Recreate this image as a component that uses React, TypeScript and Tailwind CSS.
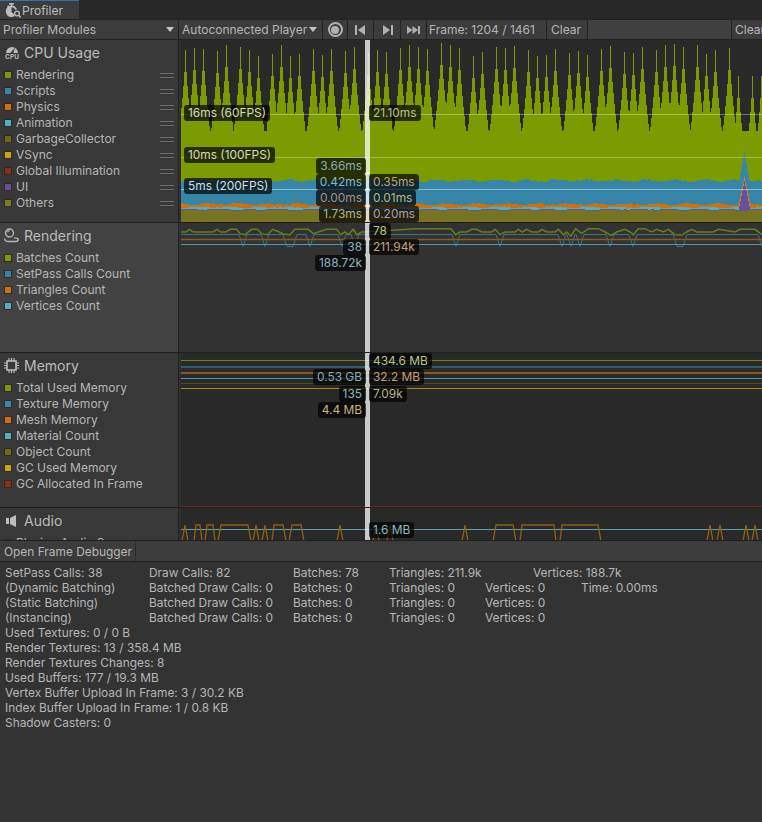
import React from 'react';

const rnd = (i: number) => {
  const v = Math.sin(i * 12.9898) * 43758.5453;
  return v - Math.floor(v);
};

// spikes of the rendering band in the cpu chart
const spikes: { x: number; top: number }[] = [];
{
  const gaps = [9, 9, 14, 9, 14, 9, 9, 14, 9, 9, 9, 14];
  let x = 185;
  let i = 0;
  while (x < 762) {
    let top = 43 + rnd(i + 3) * 13;
    if (x > 735) top = 76;
    spikes.push({ x, top });
    x += gaps[i % gaps.length];
    i++;
  }
}

const steps = (fn: (x: number) => number, bottom = 222) => {
  const p: string[] = [`181,${bottom}`];
  for (let x = 181; x < 762; x++) {
    const y = Math.round(fn(x));
    p.push(`${x},${y}`, `${x + 1},${y}`);
  }
  p.push(`762,${bottom}`);
  return p.join(' ');
};

const greenTop = (x: number) => {
  let y = 131;
  for (const s of spikes) {
    const d = Math.abs(x - s.x);
    y = Math.min(y, s.top + 22 * Math.pow(d, 0.7));
  }
  return y;
};
const wobble = (x: number, a: number, seed: number) =>
  Math.sin(x * 0.21 + seed) * a * 0.6 + (rnd(Math.floor(x / 3) + seed) - 0.5) * a;
const blueTop = (x: number) => Math.min(180.5 + wobble(x, 1.6, 1), 152 + Math.abs(x - 744) * 5.5);
const orangeTop = (x: number) => Math.min(204.2 + wobble(x, 1.2, 5), 176 + Math.abs(x - 744) * 4.5);
const tealTop = (x: number) => Math.min(207.4 + wobble(x, 0.6, 7), 179 + Math.abs(x - 744) * 5);
const purpleTop = (x: number) => Math.min(209.4 + wobble(x, 0.5, 9), 181 + Math.abs(x - 744) * 5);
const oliveTop = (x: number) => Math.min(210.4 + wobble(x, 0.5, 9), 211);

const CpuChart = () => (
  <svg width={581} height={182} viewBox="181 40 581 182" className="absolute left-0 top-0" shapeRendering="crispEdges">
    <polygon points={steps(greenTop)} fill="#7b9b00" />
    <polygon points={steps(blueTop)} fill="#3586a9" />
    <polygon points={steps(orangeTop)} fill="#d2700a" />
    <polygon points={steps(tealTop)} fill="#4fb1bd" />
    <polygon points={steps(purpleTop)} fill="#6b4f9c" />
    <polygon points={steps(oliveTop)} fill="#767420" />
    <rect x={181} y={114} width={581} height={1} fill="#ffffff" fillOpacity={0.35} />
    <rect x={181} y={157} width={581} height={1} fill="#ffffff" fillOpacity={0.3} />
    <rect x={181} y={189} width={581} height={1} fill="#ffffff" fillOpacity={0.45} />
  </svg>
);

// zoomed readings of the batches line, 3x around the crop origin
const batchesA = [[0, 30], [18, 30], [28, 22], [40, 30], [100, 30], [110, 22], [122, 30], [138, 30], [150, 22], [170, 22], [180, 35], [195, 38], [215, 22], [232, 22], [245, 35], [262, 38], [278, 22], [298, 30], [310, 36], [330, 38], [345, 22], [385, 22], [400, 35], [440, 22], [470, 22], [482, 38], [495, 30], [505, 38], [520, 22], [530, 38], [545, 30], [556, 30]];
const batchesB = [[0, 20], [108, 20], [122, 38], [135, 30], [155, 30], [170, 22], [185, 22], [200, 30], [230, 30], [240, 22], [255, 38], [270, 30], [300, 30], [310, 22], [322, 30], [335, 22], [350, 30], [370, 30], [380, 22], [395, 30], [420, 30], [430, 22], [445, 38], [455, 30], [468, 42], [482, 20], [500, 35], [520, 20], [550, 20], [570, 30], [588, 40], [605, 30], [630, 22], [645, 30], [655, 38], [670, 20], [690, 20], [710, 30], [725, 22], [745, 30], [760, 22], [780, 38], [800, 40], [815, 30], [830, 22], [845, 30], [895, 30], [910, 22], [930, 25], [960, 30], [975, 22], [1020, 22], [1041, 38]];
const batchesLine = [
  ...batchesA.map(([x, y]) => `${180 + x / 3},${222 + y / 3}`),
  ...batchesB.map(([x, y]) => `${415 + x / 3},${222 + y / 3}`),
].join(' ');

const setPassDips = [[243, 0], [265, 0], [290, 3], [310, 0], [342, 0], [355, 0], [456, 0], [500, 0], [562, 0], [571, 0], [580, 0], [610, 0], [633, 0], [680, 3], [762, 0]];
const setPassLine = () => {
  const p: string[] = [];
  for (let x = 181; x <= 762; x++) {
    let y = 234.5;
    for (const [d, w] of setPassDips) {
      const t = Math.max(0, 1 - Math.max(0, Math.abs(x - d) - w) / 4);
      y = Math.max(y, 234.5 + 12 * t);
    }
    p.push(`${x},${y}`);
  }
  return p.join(' ');
};

const RenderingChart = () => (
  <svg width={581} height={129} viewBox="181 223 581 129" className="absolute left-0 top-0" fill="none">
    <polyline points={setPassLine()} stroke="#37768f" />
    <line x1={181} x2={762} y1={239.5} y2={239.5} stroke="#8c5a20" strokeWidth={1.4} />
    <line x1={181} x2={762} y1={244.5} y2={244.5} stroke="#4f9aa6" />
    <polyline points={batchesLine} stroke="#6a7f10" strokeWidth={1.5} />
  </svg>
);

const MemoryChart = () => (
  <svg width={581} height={154} viewBox="181 353 581 154" className="absolute left-0 top-0" shapeRendering="crispEdges">
    <rect x={181} y={360} width={581} height={1} fill="#6f8c08" />
    <rect x={181} y={366} width={581} height={2} fill="#2f5d74" />
    <rect x={181} y={372} width={581} height={2} fill="#845a20" />
    <rect x={181} y={378} width={581} height={1} fill="#4c9aa5" />
    <rect x={181} y={383} width={581} height={1} fill="#4c4c18" />
    <rect x={181} y={388} width={581} height={1} fill="#a88a10" />
    <rect x={181} y={506} width={581} height={1} fill="#6a2c18" />
  </svg>
);

const peaks = [185, 256, 265, 340, 376, 390, 465, 710, 720, 746, 755];
const traps = [[194, 196, 200, 202], [205, 207, 213, 215], [218, 221, 248, 251], [272, 274, 283, 286], [289, 292, 301, 304], [493, 496, 513, 516], [520, 522, 554, 556], [560, 562, 598, 601]];

const AudioChart = () => (
  <svg width={581} height={33} viewBox="181 508 581 33" className="absolute left-0 top-0" fill="none">
    <line x1={181} x2={762} y1={529.5} y2={529.5} stroke="#5ea3ab" />
    {peaks.map((x) => (
      <polyline key={x} points={`${x - 3},541 ${x},525 ${x + 3},541`} stroke="#8f5f14" strokeWidth={1.3} />
    ))}
    {traps.map((t) => (
      <polyline key={t[0]} points={`${t[0]},541 ${t[1]},525 ${t[2]},525 ${t[3]},541`} stroke="#8f5f14" strokeWidth={1.3} />
    ))}
  </svg>
);

const labelBase = 'h-[16px] rounded-[3px] bg-black/70 px-1 text-[11.9px] leading-[16px] whitespace-nowrap';

const Label = ({ text, className }: { text: string; className: string }) => (
  <div className={`${labelBase} ${className}`}>{text}</div>
);

// value tags either side of the selected frame
const TagsLeft = ({ className, children }: { className: string; children: React.ReactNode }) => (
  <div className={`absolute right-[396px] flex flex-col items-end ${className}`}>{children}</div>
);
const TagsRight = ({ className, children }: { className: string; children: React.ReactNode }) => (
  <div className={`absolute left-[188px] flex flex-col items-start ${className}`}>{children}</div>
);

const Swatch = ({ color }: { color: string }) => (
  <span className="h-[8px] w-[8px] shrink-0 border border-[#2c2c2c]" style={{ backgroundColor: color }} />
);

const LegendRow = ({ name, color, handle }: { name: string; color: string; handle?: boolean }) => (
  <div className="flex h-[16px] items-center pl-[4px] text-[12px] text-[#b6b6b6]">
    <Swatch color={color} />
    <span className="ml-[4px] whitespace-nowrap">{name}</span>
    {handle && (
      <span className="ml-auto mr-[4px] flex h-[5px] w-[14px] flex-col justify-between">
        <span className="h-px bg-[#6e6e6e]" />
        <span className="h-px bg-[#6e6e6e]" />
      </span>
    )}
  </div>
);

const Section = ({
  icon,
  title,
  items,
  handle,
  height,
  panel = 'bg-[#383838]',
  chartBg = 'bg-[#292929]',
  children,
}: {
  icon: React.ReactNode;
  title: string;
  items: [string, string][];
  handle?: boolean;
  height: string;
  panel?: string;
  chartBg?: string;
  children: React.ReactNode;
}) => (
  <div className={`flex border-b border-[#1f1f1f] ${height}`}>
    <div className={`w-[178px] shrink-0 overflow-hidden ${panel}`}>
      <div className="flex h-[27px] items-center pb-[2px] pl-[4px] text-[14px] text-[#bcbcbc]">
        <span className="flex w-[20px] shrink-0 items-center">{icon}</span>
        {title}
      </div>
      {items.map(([n, c]) => (
        <LegendRow key={n} name={n} color={c} handle={handle} />
      ))}
    </div>
    <div className="w-[3px] shrink-0 border-l border-[#232323] bg-[#303030]" />
    <div className={`relative flex-1 overflow-hidden ${chartBg}`}>
      {children}
    </div>
  </div>
);

const Selection = () => <div className="absolute bottom-0 left-[184px] top-0 w-[5px] bg-white/75" />;
const Dot = ({ className }: { className: string }) => <div className={`absolute left-[186px] h-[2px] w-[2px] bg-white ${className}`} />;

const Arrow = () => (
  <svg width={8} height={5} viewBox="0 0 8 5">
    <path d="M0 0h8L4 5z" fill="#c4c4c4" />
  </svg>
);

const StopwatchIcon = () => (
  <svg width={17} height={16} viewBox="0 0 17 16" fill="#bcbcbc">
    <rect x={4} y={0} width={5} height={1.6} />
    <rect x={5.7} y={1} width={1.6} height={2} />
    <path d="M2 3.500l1.200-1.200 1.200 1.200-1.200 1.200z" />
    <path d="M6.500 2.500a5.800 5.800 0 1 0 0 11.600 5.800 5.800 0 0 0 3.200-1l-1-2.300-2.200-1.900V4.300c1.800 0 3.300 1.100 3.900 2.700l1.500-.8a5.800 5.800 0 0 0-5.400-3.700z" />
    <circle cx={12} cy={10.500} r={2.300} fill="none" stroke="#bcbcbc" strokeWidth={1.3} />
    <path d="M13.700 12.300l2 2.200" stroke="#bcbcbc" strokeWidth={1.4} />
  </svg>
);

const CpuIcon = () => (
  <div className="flex w-[16px] flex-col items-center">
    <svg width={12} height={8} viewBox="0 0 12 8" fill="#bcbcbc">
      <path d="M0 8a6 6 0 0 1 12 0H7.400L9 2.500 5.600 6.600A1.800 1.800 0 0 0 4.500 8z" />
    </svg>
    <span className="mt-[0.5px] text-[6.5px] font-bold leading-[6px] text-[#bcbcbc]">CPU</span>
  </div>
);

const RenderingIcon = () => (
  <svg width={15} height={15} viewBox="0 0 15 15" fill="none" stroke="#bcbcbc" strokeWidth={1.3}>
    <circle cx={5.500} cy={5} r={4} />
    <path d="M3.500 4.200c.4-1 1-1.500 2-1.600" />
    <path d="M1 10.500c-.8 1.600.6 3 3 3h7c2.400 0 3.600-1 3.200-2.200-.3-1-1.700-1.600-4.200-1.500" />
  </svg>
);

const ChipIcon = () => (
  <svg width={15} height={15} viewBox="0 0 15 15" fill="none" stroke="#bcbcbc">
    <rect x={3} y={3} width={9} height={9} strokeWidth={1.6} />
    <path d="M5 0v3M7.500 0v3M10 0v3M5 12v3M7.500 12v3M10 12v3M0 5h3M0 7.500h3M0 10h3M12 5h3M12 7.500h3M12 10h3" strokeWidth={1.1} />
  </svg>
);

const SpeakerIcon = () => (
  <svg width={14} height={14} viewBox="0 0 14 14" fill="#bcbcbc">
    <rect x={2} y={4} width={3} height={6} />
    <path d="M6 4l6-3v12l-6-3z" />
  </svg>
);

const ToolButton = ({ className, children }: { className: string; children?: React.ReactNode }) => (
  <div className={`flex h-full shrink-0 items-center border-r border-[#232323] bg-[#3c3c3c] text-[12px] text-[#b6b6b6] ${className}`}>{children}</div>
);

const Row = ({ cols }: { cols: [string, string][] }) => (
  <div className="flex h-[15px] leading-[15px] whitespace-nowrap">
    {cols.map(([t, w]) => (
      <span key={t + w} className={w}>{t}</span>
    ))}
  </div>
);

const batching = (name: string) => (
  <Row
    cols={[
      [name, 'w-[144px]'],
      ['Batched Draw Calls: 0', 'w-[144px]'],
      ['Batches: 0', 'w-[96px]'],
      ['Triangles: 0', 'w-[96px]'],
      ['Vertices: 0', 'w-[96px]'],
    ]}
  />
);

export default function App() {
  return (
    <div className="h-[822px] w-[762px] overflow-hidden bg-[#333333] font-['Inter',sans-serif]">
      {/* Tab strip */}
      <div className="h-[19px] bg-[#282828]">
        <div className="flex h-[19px] w-[79px] items-center border-t border-[#3a6ea5] bg-[#3c3c3c] pl-[5px] pt-[1px] text-[12px] text-[#bcbcbc]">
          <StopwatchIcon />
          Profiler
        </div>
      </div>

      {/* Toolbar */}
      <div className="flex h-[21px] border-y border-[#232323]">
        <ToolButton className="w-[179px] justify-between pl-[3px] pr-[4px]">
          Profiler Modules
          <Arrow />
        </ToolButton>
        <ToolButton className="w-[144px] justify-between pl-[3px] pr-[5px]">
          Autoconnected Player
          <Arrow />
        </ToolButton>
        <ToolButton className="w-[25px] justify-center">
          <span className="flex h-[15px] w-[15px] items-center justify-center rounded-full border-[2px] border-[#b0b0b0]">
            <span className="h-[8px] w-[8px] rounded-full bg-[#b0b0b0]" />
          </span>
        </ToolButton>
        <ToolButton className="w-[26px] justify-center">
          <svg width={11} height={10} viewBox="0 0 11 10" fill="#b0b0b0"><rect x={0} y={0} width={2} height={10} /><path d="M10 0v10L3 5z" /></svg>
        </ToolButton>
        <ToolButton className="w-[27px] justify-center">
          <svg width={11} height={10} viewBox="0 0 11 10" fill="#b0b0b0"><rect x={9} y={0} width={2} height={10} /><path d="M1 0v10l7-5z" /></svg>
        </ToolButton>
        <ToolButton className="w-[26px] justify-center">
          <svg width={13} height={8} viewBox="0 0 13 8" fill="#b0b0b0"><path d="M0 0v8l5.500-4zM5.500 0v8l5.500-4z" /><rect x={11} y={0} width={2} height={8} /></svg>
        </ToolButton>
        <ToolButton className="w-[120px] pl-[2px]">Frame: 1204 / 1461</ToolButton>
        <ToolButton className="w-[41px] pl-[4px]">Clear</ToolButton>
        <ToolButton className="w-[144px] !bg-[#404040]" />
        <ToolButton className="flex-1 overflow-hidden pl-[3px] border-r-0">Clear</ToolButton>
      </div>

      {/* Modules */}
      <div className="h-[500px] overflow-hidden">
        <Section
          icon={<CpuIcon />}
          title="CPU Usage"
          height="h-[183px]"
          handle
          items={[
            ['Rendering', '#7b9b00'],
            ['Scripts', '#3586a9'],
            ['Physics', '#d2700a'],
            ['Animation', '#4fb1bd'],
            ['GarbageCollector', '#6e6c12'],
            ['VSync', '#c8a60a'],
            ['Global Illumination', '#8a2f10'],
            ['UI', '#6b4f9c'],
            ['Others', '#7a7a20'],
          ]}
        >
          <CpuChart />
          <Selection />
          <Dot className="top-[132px]" />
          <Dot className="top-[148px]" />
          <Dot className="top-[165px]" />
          <Label text="16ms (60FPS)" className="absolute left-[3px] top-[65px] text-[#d8d8c8]" />
          <Label text="10ms (100FPS)" className="absolute left-[3px] top-[107px] text-[#d8d8c8]" />
          <Label text="5ms (200FPS)" className="absolute left-[3px] top-[138px] text-[#d8dfe4]" />
          <Label text="21.10ms" className="absolute left-[188px] top-[65px] text-[#b8c284]" />
          <TagsLeft className="top-[118px]">
            <Label text="3.66ms" className="text-[#86abbc]" />
            <Label text="0.42ms" className="text-[#8ab6c0]" />
            <Label text="0.00ms" className="text-[#b68a76]" />
            <Label text="1.73ms" className="text-[#b2b28a]" />
          </TagsLeft>
          <TagsRight className="top-[134px]">
            <Label text="0.35ms" className="text-[#c69e72]" />
            <Label text="0.01ms" className="text-[#b8b878]" />
            <Label text="0.20ms" className="text-[#a69eb8]" />
          </TagsRight>
        </Section>

        <Section
          icon={<RenderingIcon />}
          title="Rendering"
          height="h-[130px]"
          panel="bg-[#424242]"
          chartBg="bg-[#323232]"
          items={[
            ['Batches Count', '#7b9b00'],
            ['SetPass Calls Count', '#3586a9'],
            ['Triangles Count', '#d2700a'],
            ['Vertices Count', '#4fb1bd'],
          ]}
        >
          <RenderingChart />
          <Selection />
          <TagsRight className="top-[0px]">
            <Label text="78" className="text-[#b8c284]" />
            <Label text="211.94k" className="text-[#c69e72]" />
          </TagsRight>
          <TagsLeft className="top-[16px]">
            <Label text="38" className="text-[#86abbc]" />
            <Label text="188.72k" className="text-[#8ab6c0]" />
          </TagsLeft>
        </Section>

        <Section
          icon={<ChipIcon />}
          title="Memory"
          height="h-[155px]"
          items={[
            ['Total Used Memory', '#7b9b00'],
            ['Texture Memory', '#3586a9'],
            ['Mesh Memory', '#d2700a'],
            ['Material Count', '#4fb1bd'],
            ['Object Count', '#6e6c12'],
            ['GC Used Memory', '#c8a60a'],
            ['GC Allocated In Frame', '#8a2f10'],
          ]}
        >
          <MemoryChart />
          <Selection />
          <TagsRight className="top-[0px]">
            <Label text="434.6 MB" className="text-[#b8c284]" />
            <Label text="32.2 MB" className="text-[#c69e72]" />
            <Label text="7.09k" className="mt-[1px] text-[#b2b28a]" />
          </TagsRight>
          <TagsLeft className="top-[16px]">
            <Label text="0.53 GB" className="text-[#86abbc]" />
            <Label text="135" className="mt-[1px] text-[#8ab6c0]" />
            <Label text="4.4 MB" className="text-[#c8b478]" />
          </TagsLeft>
        </Section>

        <Section
          icon={<SpeakerIcon />}
          title="Audio"
          height="h-[33px]"
          items={[['Playing Audio Sources', '#7b9b00']]}
        >
          <AudioChart />
          <Selection />
          <Label text="1.6 MB" className="absolute left-[188px] top-[14px] text-[#8ab6c0]" />
        </Section>
      </div>

      {/* Stats */}
      <div className="flex h-[22px] border-y border-[#1f1f1f] bg-[#3c3c3c]">
        <div className="flex w-[136px] items-center whitespace-nowrap border-r border-[#2a2a2a] pl-[4px] pt-[1px] text-[11.9px] text-[#b6b6b6]">Open Frame Debugger</div>
      </div>
      <div className="pl-[5px] pt-[3px] text-[11.9px] text-[#b6b6b6]">
        <Row
          cols={[
            ['SetPass Calls: 38', 'w-[144px]'],
            ['Draw Calls: 82', 'w-[144px]'],
            ['Batches: 78', 'w-[96px]'],
            ['Triangles: 211.9k', 'w-[144px]'],
            ['Vertices: 188.7k', 'w-[96px]'],
          ]}
        />
        <Row
          cols={[
            ['(Dynamic Batching)', 'w-[144px]'],
            ['Batched Draw Calls: 0', 'w-[144px]'],
            ['Batches: 0', 'w-[96px]'],
            ['Triangles: 0', 'w-[96px]'],
            ['Vertices: 0', 'w-[96px]'],
            ['Time: 0.00ms', 'w-[96px]'],
          ]}
        />
        {batching('(Static Batching)')}
        {batching('(Instancing)')}
        <div className="leading-[15px]">
          <div>Used Textures: 0 / 0 B</div>
          <div>Render Textures: 13 / 358.4 MB</div>
          <div>Render Textures Changes: 8</div>
          <div>Used Buffers: 177 / 19.3 MB</div>
          <div>Vertex Buffer Upload In Frame: 3 / 30.2 KB</div>
          <div>Index Buffer Upload In Frame: 1 / 0.8 KB</div>
          <div>Shadow Casters: 0</div>
        </div>
      </div>
    </div>
  );
}
